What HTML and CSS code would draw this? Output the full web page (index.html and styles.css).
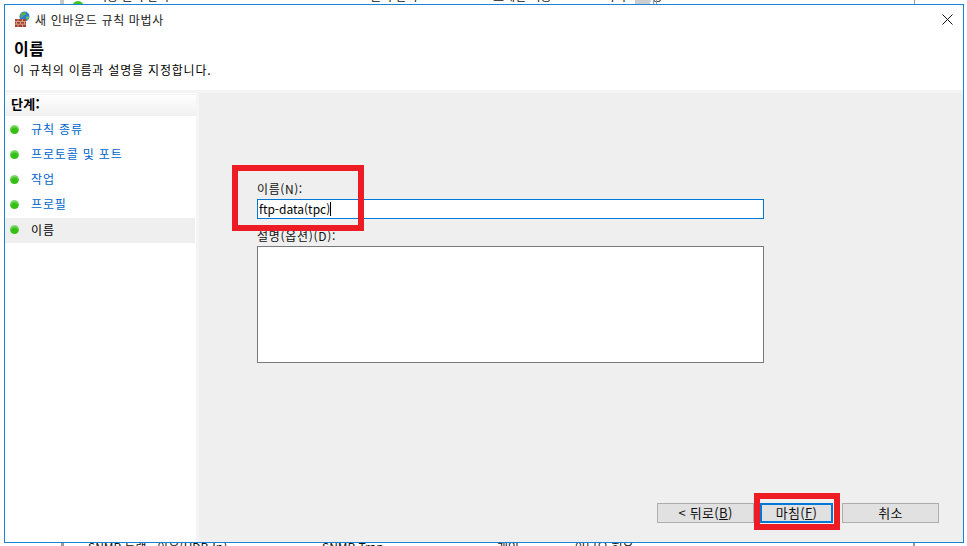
FILE: index.html
```html
<!DOCTYPE html>
<html lang="ko">
<head>
<meta charset="utf-8">
<title>새 인바운드 규칙 마법사</title>
<link rel="stylesheet" href="styles.css">
</head>
<body>
<div class="behind">
  <i class="bg-line bg-l1"></i>
  <i class="bg-blob"></i>
  <span class="bg-text bt1">허용 원격 관리</span>
  <span class="bg-text bt2">원격 관리</span>
  <span class="bg-text bt3">도메인 허용</span>
  <span class="bg-text bt4">아니요 허용</span>
  <i class="bg-thumb"></i>
  <i class="bg-line bg-l2"></i>
  <i class="bg-line bg-l3"></i>
  <i class="bg-line bg-l4"></i>
  <span class="bg-text bb1">SNMP 트랩 - 아웃(UDP-In)</span>
  <span class="bg-text bb2">SNMP Trap</span>
  <span class="bg-text bb3">개인, ...</span>
  <span class="bg-text bb4">아니요 허용</span>
  <i class="bg-line bg-l5"></i>
  <i class="bg-line bg-l6"></i>
</div>

<main class="win">
  <header class="top">
    <div class="titlebar">
      <svg class="app-icon" width="16" height="16" viewBox="0 0 16 16">
        <circle cx="10.5" cy="5.5" r="5" fill="#2f7fd0"/>
        <path d="M7 2.5c2-1.5 4-1.5 5.5-.5l-1.5 2-2 .5-.5 2L6.5 6z" fill="#5fb04a"/>
        <path d="M12 6l2.500-1 .5 2-2 2.500z" fill="#6fc05a"/>
        <path d="M1 8h11v8H1z" fill="#a4412e"/>
        <path d="M1 10.500h11M1 13.200h11M4 8v2.500M8.500 8v2.500M2.500 10.500v2.700M6.500 10.500v2.700M10.500 10.500v2.700M4 13.200V16M8.500 13.200V16" stroke="#e0b09a" stroke-width=".8" fill="none"/>
      </svg>
      <span class="title-text">새 인바운드 규칙 마법사</span>
      <svg class="close" width="11" height="11" viewBox="0 0 11 11">
        <path d="M.5.500l10 10M10.500.500l-10 10" stroke="#111" stroke-width="1" fill="none"/>
      </svg>
    </div>
    <h1 class="page-title">이름</h1>
    <p class="page-desc">이 규칙의 이름과 설명을 지정합니다.</p>
  </header>

  <div class="body">
    <nav class="steps">
      <div class="steps-head">단계:</div>
      <ul class="step-list">
        <li class="step"><i class="dot"></i><a class="step-link">규칙 종류</a></li>
        <li class="step"><i class="dot"></i><a class="step-link">프로토콜 및 포트</a></li>
        <li class="step"><i class="dot"></i><a class="step-link">작업</a></li>
        <li class="step"><i class="dot"></i><a class="step-link">프로필</a></li>
        <li class="step current"><i class="dot"></i><a class="step-link">이름</a></li>
      </ul>
    </nav>

    <section class="content">
      <form class="form">
        <label class="field-label">이름(N):</label>
        <div class="input focused">ftp-data(tpc)<i class="caret"></i></div>
        <label class="field-label second">설명(옵션)(D):</label>
        <div class="textarea"></div>
      </form>
      <div class="buttons">
        <button type="button" class="btn back">&lt; 뒤로(<u>B</u>)</button>
        <button type="button" class="btn primary">마침(<u>F</u>)</button>
        <button type="button" class="btn cancel">취소</button>
      </div>
    </section>
  </div>
</main>

<div class="mark mark-name"></div>
<div class="mark mark-finish"></div>
</body>
</html>
```

FILE: styles.css
```css
* { box-sizing: border-box; }
html, body {
  margin: 0;
  height: 546px;
  overflow: hidden;
  background: #fff;
  font-family: "Noto Sans CJK KR", "Liberation Sans", sans-serif;
  font-size: 12px;
  color: #000;
}
.behind { position: absolute; inset: 0; overflow: hidden; }
.bg-text { position: absolute; font-size: 12px; line-height: 14px; white-space: nowrap; color: #111; }
.bt1 { left: 96px; top: -11px; }
.bt2 { left: 370px; top: -11px; }
.bt3 { left: 493px; top: -11px; }
.bt4 { left: 604px; top: -11px; }
.bb1 { left: 88px; top: 540px; }
.bb2 { left: 322px; top: 540px; }
.bb3 { left: 497px; top: 540px; }
.bb4 { left: 575px; top: 540px; }
.bg-line { position: absolute; width: 1px; background: #9a9a9a; }
.bg-l1 { left: 60px; top: 0; height: 4px; width: 4px; background: #c8c8c8; }
.bg-l2 { left: 653px; top: 0; height: 4px; }
.bg-l3 { left: 656px; top: 0; height: 4px; }
.bg-l4 { left: 914px; top: 0; height: 4px; }
.bg-l5 { left: 61px; top: 543px; height: 3px; width: 3px; }
.bg-l6 { left: 913px; top: 543px; height: 3px; width: 2px; }
.bg-blob { position: absolute; left: 72px; top: 1px; width: 12px; height: 12px; border-radius: 50%; background: #3ec81e; }
.bg-thumb { position: absolute; left: 635px; top: 0; width: 15px; height: 4px; background: #cdcdcd; }

.win {
  position: absolute;
  left: 4px;
  top: 4px;
  width: 960px;
  height: 539px;
  border: 1px solid #1883d7;
  background: #fff;
  display: flex;
  flex-direction: column;
}
.top { flex: none; border-bottom: 3px solid #f4f4f4; background: #fff; height: 88px; }
.titlebar { height: 28px; display: flex; align-items: center; padding: 0 10px 0 9px; }
.app-icon { flex: none; margin: 0 5px 0 0; }
.title-text { flex: 1; font-size: 12px; letter-spacing: .65px; color: #222; }
.close { flex: none; }
.page-title { margin: 5px 0 0 9px; font-size: 16px; line-height: 20px; font-weight: 700; letter-spacing: .5px; }
.page-desc { margin: 3px 0 0 8px; font-size: 12px; line-height: 18px; letter-spacing: .8px; }

.body { flex: 1; display: flex; min-height: 0; }
.steps { width: 194px; flex: none; border-right: 3px solid #f5f5f5; background: #fff; padding-top: 1px; }
.steps-head { height: 22px; line-height: 18px; padding-left: 6px; font-weight: 700; font-size: 13px; letter-spacing: .3px; background: linear-gradient(#fff, #f0f0f0); border-top: 1px solid #f2f2f2; width: 191px; }
.step-list { list-style: none; margin: 2px 0 0; padding: 0; }
.step { height: 25px; width: 190px; display: flex; align-items: center; padding-left: 5px; }
.step.current { background: #efefef; }
.dot { flex: none; width: 9px; height: 9px; border-radius: 50%; margin: 0 12px 3px 0; background: radial-gradient(circle at 50% 75%, #35c015 0 40%, #7fd868 70%, #b9d8b4 100%); }
.step-link { color: #0066cc; letter-spacing: .85px; font-size: 12px; position: relative; top: -2px; }
.current .step-link { color: #000; top: -1px; }

.content { flex: 1; background: #efefef; display: flex; flex-direction: column; padding: 89px 24px 19px 58px; }
.form { flex: 1; width: 507px; }
.field-label { display: block; height: 17px; line-height: 14px; font-size: 12px; letter-spacing: .6px; color: #111; }
.field-label.second { margin-top: 10px; letter-spacing: .7px; }
.input, .textarea { background: #fff; border: 1px solid #7a7a7a; width: 507px; }
.input { height: 20px; line-height: 18px; padding-left: 1px; font-size: 12px; letter-spacing: 0; white-space: nowrap; }
.input.focused { border-color: #0078d7; }
.caret { display: inline-block; width: 1px; height: 14px; background: #000; vertical-align: -2px; }
.textarea { height: 117px; }
.buttons { display: flex; justify-content: flex-end; }
.btn {
  height: 20px;
  padding: 0;
  background: #e1e1e1;
  border: 1px solid #adadad;
  font: inherit;
  font-size: 13px;
  letter-spacing: .3px;
  line-height: 16px;
  color: #111;
}
.back { width: 97px; margin-right: 6px; }
.primary { width: 73px; border: 2px solid #0078d7; margin-right: 9px; }
.cancel { width: 97px; }

.mark { position: absolute; border: 6px solid #ed1c24; }
.mark-name { left: 232px; top: 165px; width: 132px; height: 66px; }
.mark-finish { left: 754px; top: 493px; width: 86px; height: 37px; }
```
